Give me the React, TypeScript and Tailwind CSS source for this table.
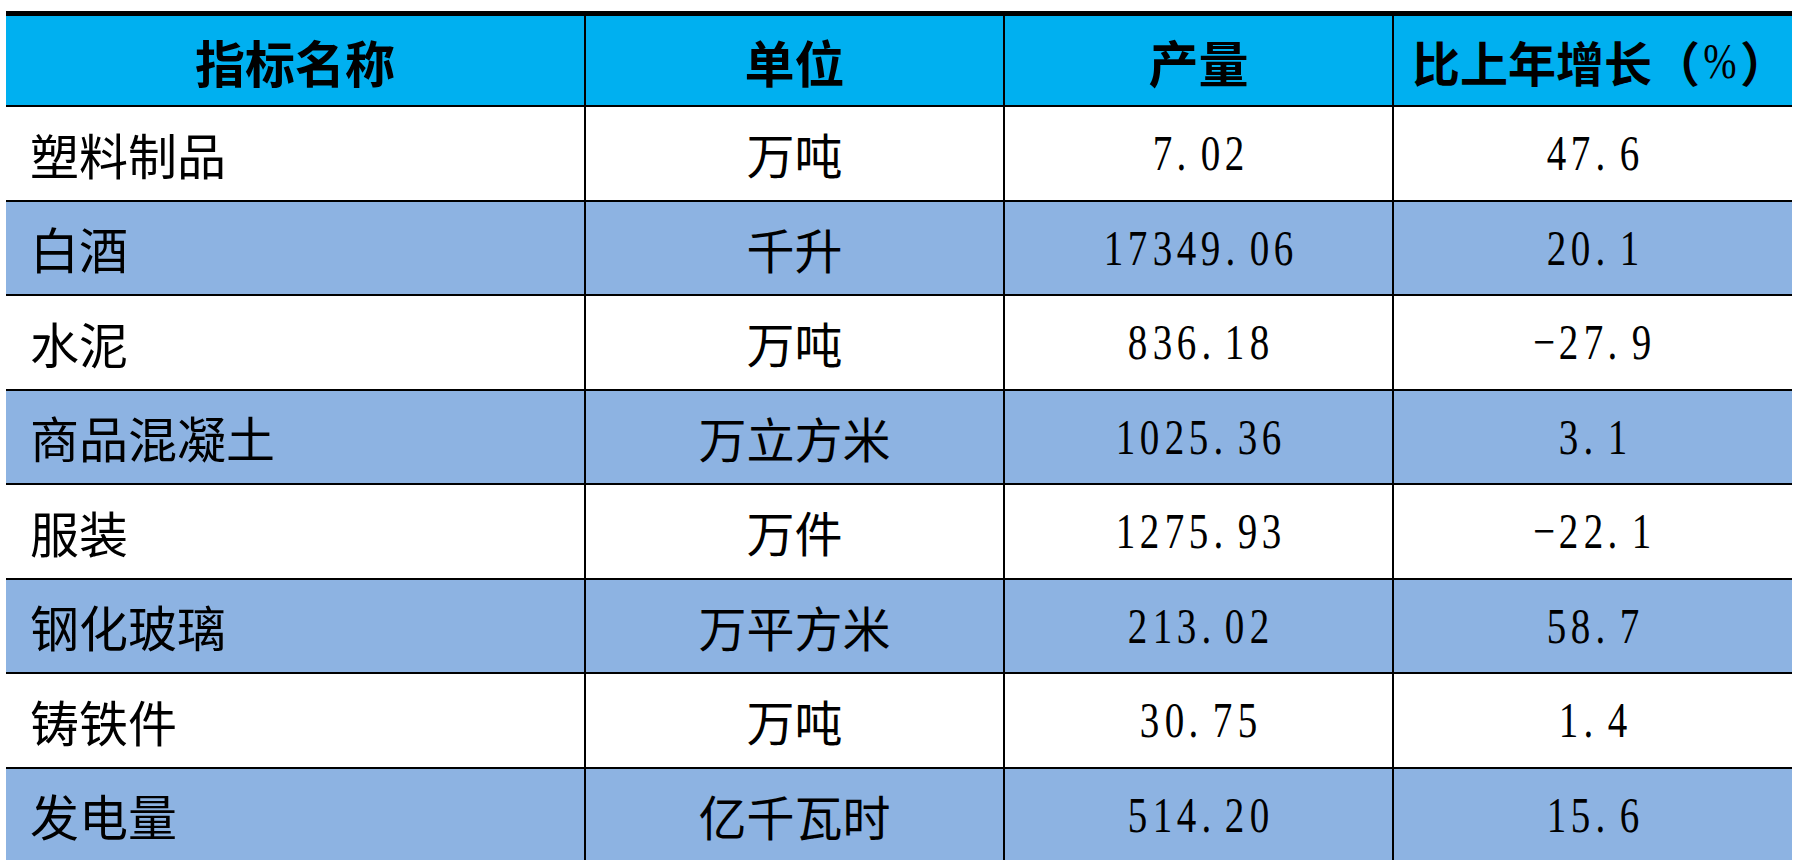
import React from 'react';

type Row = { name: string; unit: string; output: string; growth: string };

const rows: Row[] = [
  { name: '塑料制品', unit: '万吨', output: '7.02', growth: '47.6' },
  { name: '白酒', unit: '千升', output: '17349.06', growth: '20.1' },
  { name: '水泥', unit: '万吨', output: '836.18', growth: '−27.9' },
  { name: '商品混凝土', unit: '万立方米', output: '1025.36', growth: '3.1' },
  { name: '服装', unit: '万件', output: '1275.93', growth: '−22.1' },
  { name: '钢化玻璃', unit: '万平方米', output: '213.02', growth: '58.7' },
  { name: '铸铁件', unit: '万吨', output: '30.75', growth: '1.4' },
  { name: '发电量', unit: '亿千瓦时', output: '514.20', growth: '15.6' },
];

// narrow serif digits, every char on the same pitch
const Num = ({ v }: { v: string }) => (
  <span className="inline-flex font-['Liberation_Serif',serif] text-[50px] leading-none text-black">
    {v.split('').map((c, i) => (
      <span
        key={i}
        className={c === '.' ? 'inline-flex w-[24.3px] justify-start pl-[1px]' : 'inline-flex w-[24.3px] justify-center'}
      >
        <span className="inline-block scale-x-[0.78]">{c}</span>
      </span>
    ))}
  </span>
);

const cjk = "font-['Noto_Sans_CJK_SC','Noto_Sans',sans-serif]";

const App = () => {
  return (
    <div className="w-[1796px] h-[860px] overflow-hidden bg-white">
      <div className="ml-[6px] mt-[11px] w-[1786px] border-t-[5px] border-black">
        {/* header */}
        <div className={`grid grid-cols-[580px_419px_389px_1fr] h-[91px] bg-[#00b0f0] border-b-2 border-black ${cjk} text-[50px] font-bold leading-none text-black`}>
          <div className="flex items-center justify-center border-r-2 border-black">指标名称</div>
          <div className="flex items-center justify-center border-r-2 border-black">单位</div>
          <div className="flex items-center justify-center border-r-2 border-black">产量</div>
          <div className="flex items-center pl-[18px] text-[48px] whitespace-nowrap">
            <span className="shrink-0">比上年增长（</span>
            <span className="shrink-0 inline-flex w-[40px] justify-center font-['Liberation_Serif',serif] font-normal text-[50px]">
              <span className="inline-block scale-x-[0.8]">%</span>
            </span>
            <span className="shrink-0">）</span>
          </div>
        </div>

        {rows.map((r, i) => (
          <div
            key={r.name}
            className={`grid grid-cols-[580px_419px_389px_1fr] h-[94.5px] border-b-2 border-black ${i % 2 === 1 ? 'bg-[#8db3e2]' : 'bg-white'}`}
          >
            <div className={`flex items-center pl-[24px] border-r-2 border-black ${cjk} text-[49px] leading-none text-black`}>
              {r.name}
            </div>
            <div className={`flex items-center justify-center border-r-2 border-black ${cjk} text-[48px] leading-none text-black`}>
              {r.unit}
            </div>
            <div className="flex items-center justify-center border-r-2 border-black">
              <Num v={r.output} />
            </div>
            <div className="flex items-center justify-center">
              <Num v={r.growth} />
            </div>
          </div>
        ))}
      </div>
    </div>
  );
};

export default App;
